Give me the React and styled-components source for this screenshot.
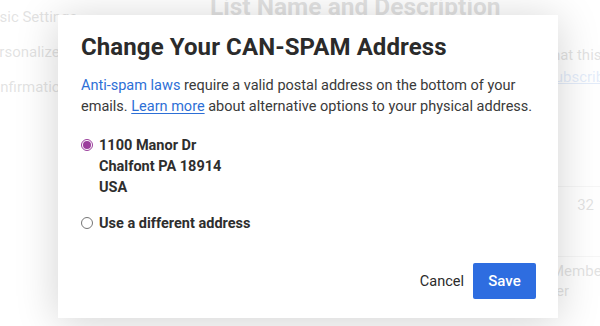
import React from "react";
import styled, { createGlobalStyle } from "styled-components";

const Global = createGlobalStyle`
  html, body { margin: 0; padding: 0; background: #fff; }
  body { font-family: Roboto, "Noto Sans", Arial, sans-serif; width: 600px; height: 326px; overflow: hidden; }
  * { box-sizing: border-box; }
`;

const Stage = styled.div`
  position: relative;
  width: 600px;
  height: 326px;
  overflow: hidden;
  background: #fff;
`;

const Page = styled.div`
  display: grid;
  grid-template-columns: 190px 1fr;
  margin-left: -18px;
  width: 700px;
  color: #222;
`;

const Sidebar = styled.nav`
  display: flex;
  flex-direction: column;
  gap: 16px;
  padding-top: 8px;
`;

const SideItem = styled.div`
  font-size: 15px;
  line-height: 19px;
  white-space: nowrap;
`;

const Main = styled.main`
  display: flex;
  flex-direction: column;
  padding-left: 38px;
`;

const PageTitle = styled.h1`
  margin: -8px 0 0;
  font-size: 24.5px;
  font-weight: 700;
  line-height: 30px;
  white-space: nowrap;
`;

const Para = styled.p`
  margin: 22px 0 0 337px;
  font-size: 15px;
  line-height: 22px;
  white-space: nowrap;
  a { color: #2d6fd6; text-decoration: underline; }
`;

const Table = styled.div`
  display: flex;
  flex-direction: column;
  margin-top: 98px;
  margin-left: 341px;
`;

const TableRow = styled.div`
  display: flex;
  align-items: flex-start;
  height: 70px;
  border-top: 1px solid #bbb;
  font-size: 15px;
  line-height: 20px;
`;

const Cell = styled.div`
  display: flex;
  flex-direction: column;
  width: ${(p) => p.$w}px;
  padding-top: ${(p) => p.$pt}px;
  align-items: ${(p) => (p.$align === "right" ? "flex-end" : "flex-start")};
`;

const CellLine = styled.span`
  white-space: nowrap;
  align-self: ${(p) => (p.$end ? "flex-end" : "auto")};
`;

const Overlay = styled.div`
  position: absolute;
  inset: 0;
  background: rgba(255, 255, 255, 0.87);
  display: flex;
  align-items: flex-start;
  padding: 15px 0 0 58px;
`;

const Dialog = styled.section`
  width: 500px;
  height: 303px;
  background: #fff;
  box-shadow: 0 4px 40px rgba(0, 0, 0, 0.18);
  padding: 17px 22px 19px 23px;
  display: flex;
  flex-direction: column;
`;

const Title = styled.h2`
  margin: 0;
  font-size: 24px;
  font-weight: 700;
  line-height: 30px;
  color: #2b2b2b;
  letter-spacing: 0.1px;
`;

const Body = styled.p`
  margin: 13px 0 0;
  font-size: 14.5px;
  line-height: 21px;
  color: #3a3a3a;
`;

const Link = styled.a`
  color: #2d6fd6;
  text-decoration: ${(p) => (p.$underline ? "underline" : "none")};
  text-underline-offset: 2px;
`;

const Options = styled.div`
  display: flex;
  flex-direction: column;
  gap: 15px;
  margin-top: 18px;
`;

const Option = styled.label`
  display: flex;
  align-items: flex-start;
  gap: 6px;
  cursor: pointer;
`;

const Radio = styled.span`
  flex: none;
  width: 12px;
  height: 12px;
  margin-top: 4px;
  border-radius: 50%;
  border: 1px solid ${(p) => (p.$checked ? "#9b3f9c" : "#767676")};
  display: flex;
  align-items: center;
  justify-content: center;
  &::after {
    content: "";
    width: 8px;
    height: 8px;
    border-radius: 50%;
    background: ${(p) => (p.$checked ? "#9b3f9c" : "transparent")};
  }
`;

const OptionText = styled.div`
  font-size: 14.5px;
  font-weight: 700;
  line-height: 21px;
  color: #2e2e2e;
`;

const Footer = styled.div`
  margin-top: auto;
  display: flex;
  justify-content: flex-end;
  align-items: center;
  gap: 9px;
`;

const TextButton = styled.button`
  background: none;
  border: 0;
  padding: 0;
  font: inherit;
  font-size: 14.5px;
  font-weight: 400;
  color: #2b2b2b;
`;

const PrimaryButton = styled.button`
  width: 63px;
  height: 36px;
  border: 0;
  border-radius: 2px;
  background: #2e6de0;
  color: #fff;
  font: inherit;
  font-size: 15px;
  font-weight: 500;
`;

export default function App() {
  return (
    <>
      <Global />
      <Stage>
        <Page>
          <Sidebar>
            <SideItem>Basic Settings</SideItem>
            <SideItem>Personalize</SideItem>
            <SideItem>Confirmation</SideItem>
          </Sidebar>
          <Main>
            <PageTitle>List Name and Description</PageTitle>
            <Para>
              that this list is about
              <br />
              <a>subscribers</a>
            </Para>
            <Table>
              <TableRow>
                <Cell $w={43} $pt={8} $align="right">
                  <CellLine>32</CellLine>
                </Cell>
              </TableRow>
              <TableRow>
                <Cell $w={18} $pt={4}>
                  <CellLine>Members</CellLine>
                  <CellLine $end>Subscriber</CellLine>
                </Cell>
              </TableRow>
            </Table>
          </Main>
        </Page>
        <Overlay>
          <Dialog role="dialog" aria-labelledby="dlg-title">
            <Title id="dlg-title">Change Your CAN-SPAM Address</Title>
            <Body>
              <Link href="#">Anti-spam laws</Link> require a valid postal address on the bottom of your
              emails. <Link href="#" $underline>Learn more</Link> about alternative options to your physical address.
            </Body>
            <Options>
              <Option>
                <Radio $checked />
                <OptionText>
                  1100 Manor Dr
                  <br />
                  Chalfont PA 18914
                  <br />
                  USA
                </OptionText>
              </Option>
              <Option>
                <Radio />
                <OptionText>Use a different address</OptionText>
              </Option>
            </Options>
            <Footer>
              <TextButton>Cancel</TextButton>
              <PrimaryButton>Save</PrimaryButton>
            </Footer>
          </Dialog>
        </Overlay>
      </Stage>
    </>
  );
}
